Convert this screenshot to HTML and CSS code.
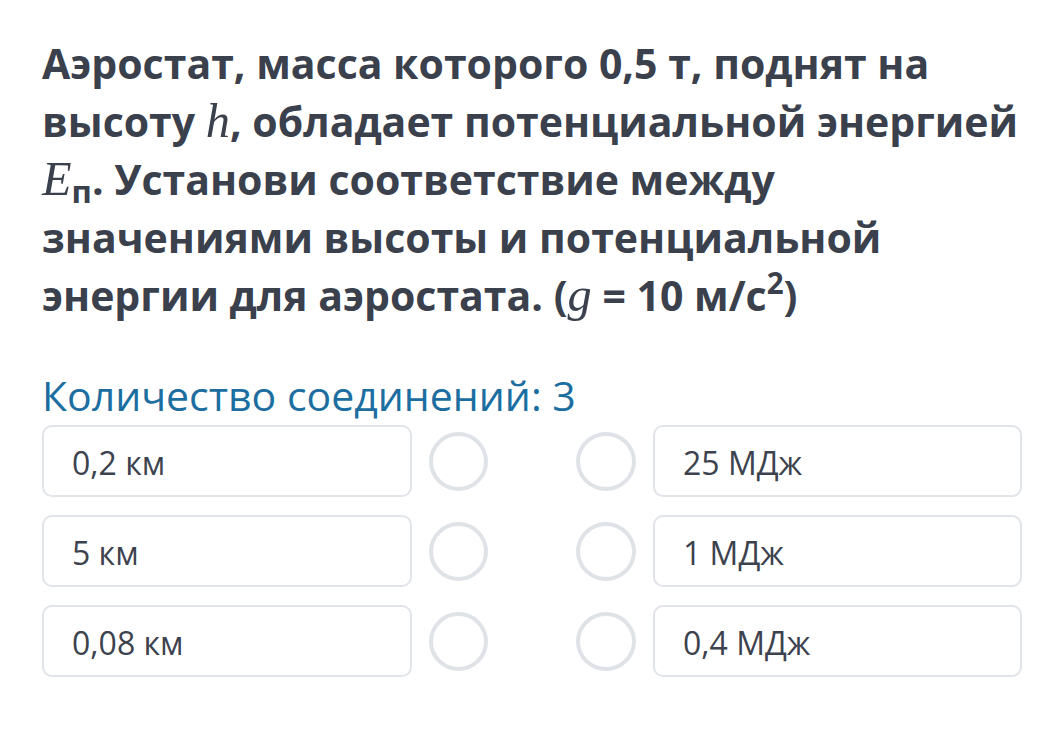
FILE: index.html
```html
<!DOCTYPE html>
<html lang="ru">
<head>
<meta charset="utf-8">
<link rel="stylesheet" href="styles.css">
</head>
<body>
<main class="task">
  <p class="question">Аэростат, масса которого 0,5 т, поднят на высоту <span class="math">h</span>, обладает потенциальной энергией <span class="math">E</span><sub class="sub">п</sub>. Установи соответствие между значениями высоты и потенциальной энергии для аэростата. (<span class="math">g</span> = 10 м/с<sup class="sup">2</sup>)</p>
  <p class="count">Количество соединений: 3</p>
  <div class="match">
    <div class="opt">0,2 км</div>
    <span class="dot"></span>
    <span class="dot dot-right"></span>
    <div class="opt">25 МДж</div>

    <div class="opt">5 км</div>
    <span class="dot"></span>
    <span class="dot dot-right"></span>
    <div class="opt">1 МДж</div>

    <div class="opt">0,08 км</div>
    <span class="dot"></span>
    <span class="dot dot-right"></span>
    <div class="opt">0,4 МДж</div>
  </div>
</main>
</body>
</html>
```
FILE: styles.css
```css
* { box-sizing: border-box; }
html, body { margin: 0; padding: 0; background: #ffffff; }
body { font-family: "Open Sans", "Noto Sans", sans-serif; }
.task { padding: 34px 20px 0 42px; }
.question {
  margin: 0;
  font-size: 41px;
  line-height: 58px;
  font-weight: 700;
  color: #3a404c;
}
.math {
  font-family: "Liberation Serif", "DejaVu Serif", serif;
  font-style: italic;
  font-weight: 400;
  font-size: 1.18em;
}
.sub {
  font-size: 0.76em;
  line-height: 1;
  vertical-align: -8px;
}
.sup {
  font-size: 0.72em;
  line-height: 1;
  vertical-align: 17px;
}
.count {
  margin: 44px 0 0;
  font-size: 41px;
  line-height: 54px;
  font-weight: 400;
  color: #1b6e9f;
}
.match {
  margin-top: 3px;
  width: 980px;
  display: grid;
  grid-template-columns: 370px 59px 131px 369px;
  column-gap: 17px;
  row-gap: 18px;
  align-items: center;
}
.opt {
  height: 72px;
  border: 2px solid #e1e4e8;
  border-radius: 10px;
  padding: 2px 28px 0;
  display: flex;
  align-items: center;
  font-size: 32px;
  color: #3c424e;
}
.dot {
  width: 59px;
  height: 59px;
  border: 4px solid #dfe3e7;
  border-radius: 50%;
  justify-self: start;
}
.dot-right { justify-self: end; width: 60px; }
```
